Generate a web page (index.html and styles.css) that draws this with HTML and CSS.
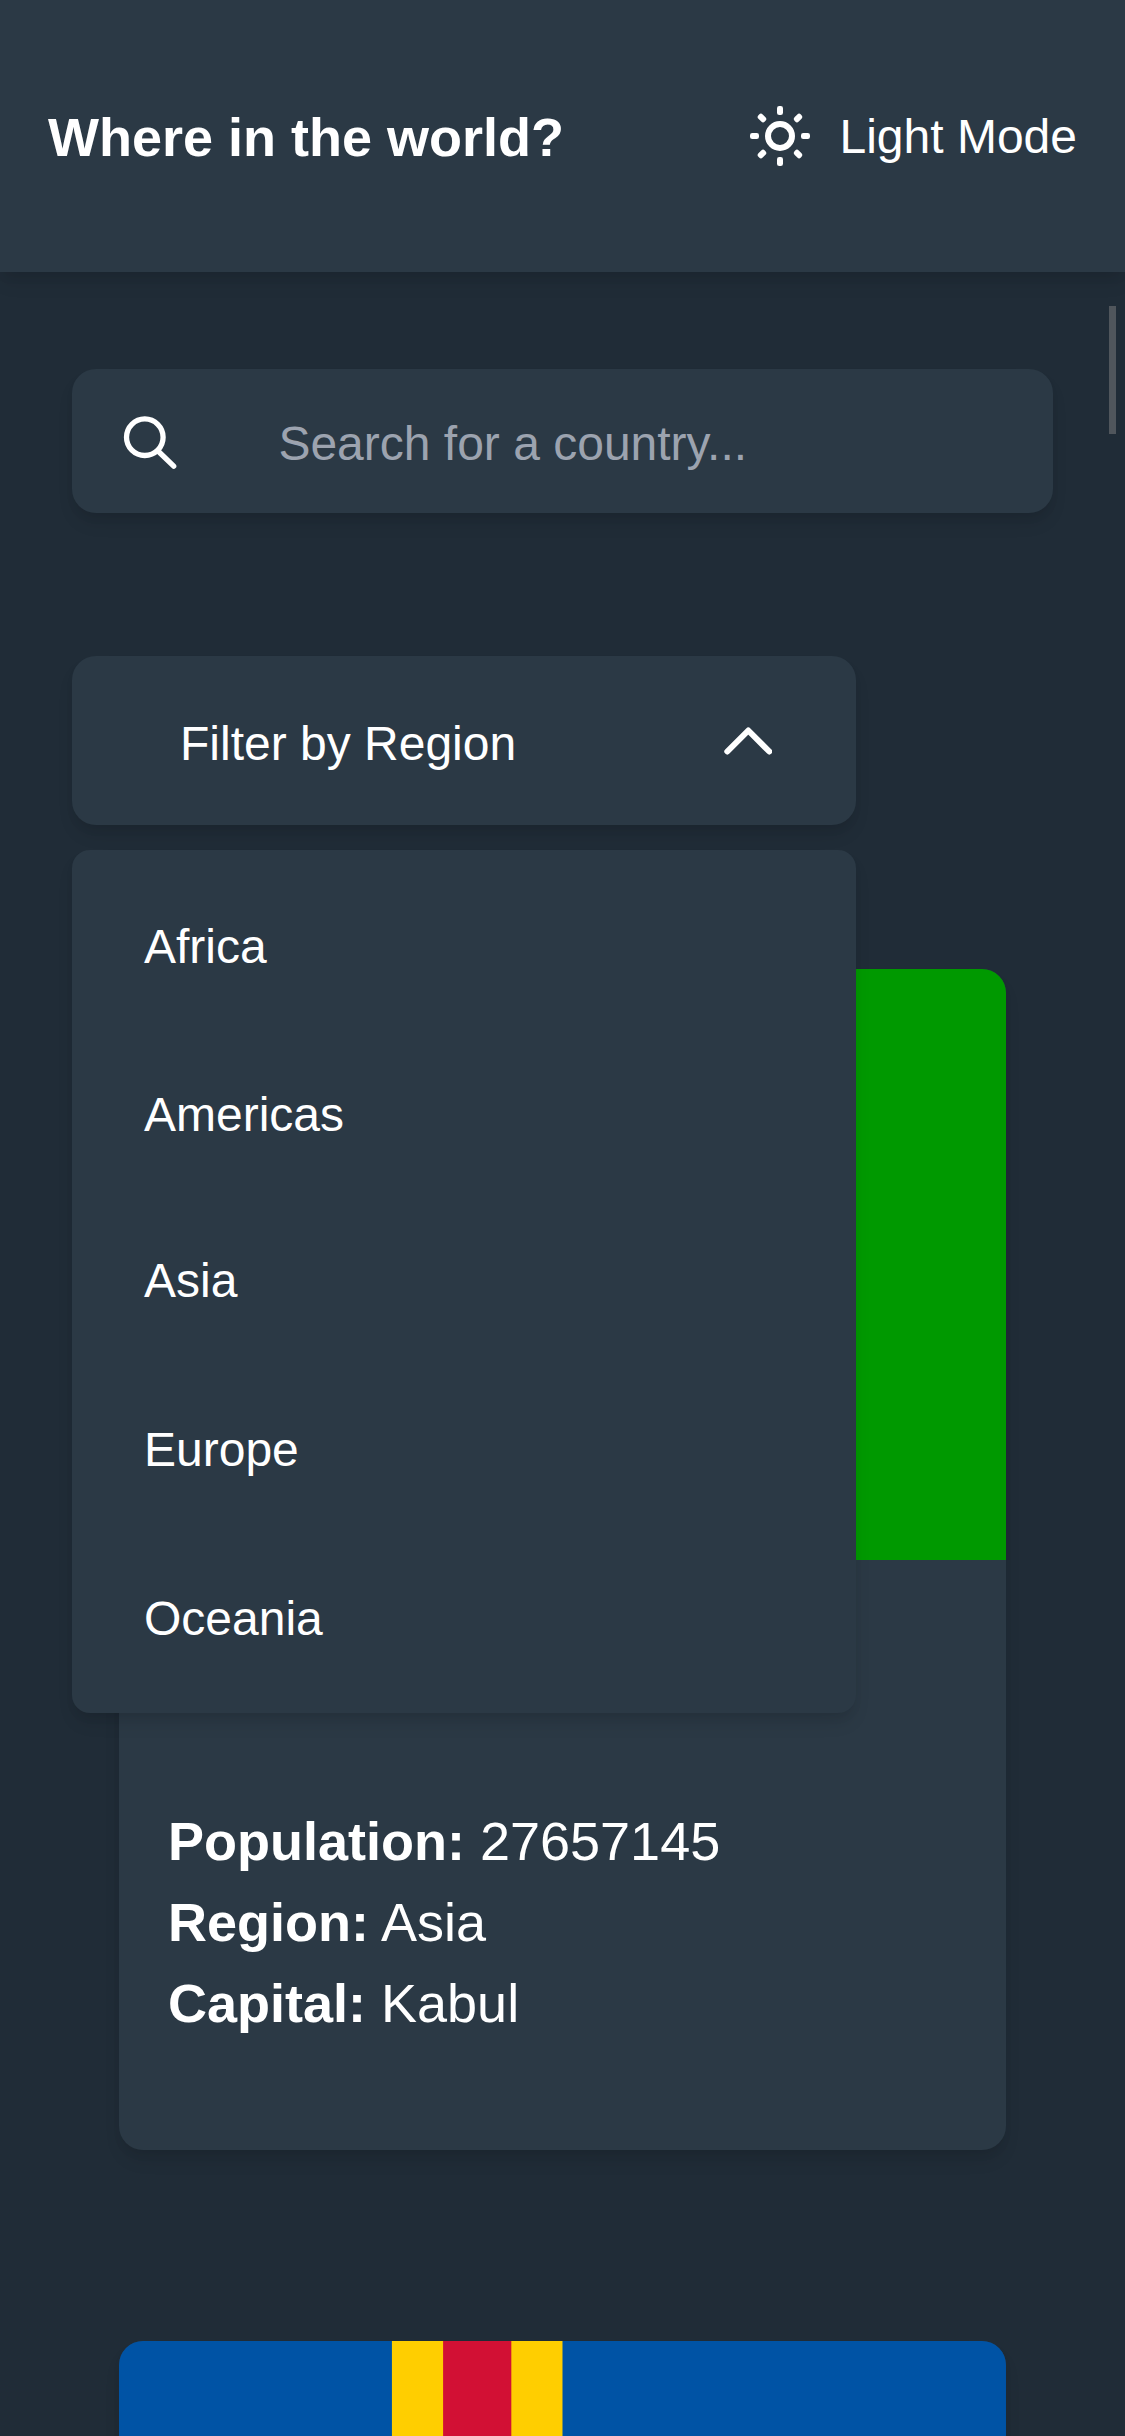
FILE: index.html
```html
<!DOCTYPE html>
<html lang="en">
<head>
<meta charset="utf-8">
<title>Where in the world?</title>
<link rel="stylesheet" href="styles.css">
</head>
<body>
<header class="header">
  <h1 class="title">Where in the world?</h1>
  <button class="theme" type="button">
    <svg class="sun" viewBox="-36 -36 72 72" fill="currentColor">
      <circle r="12" fill="none" stroke="currentColor" stroke-width="6"/>
      <rect x="-3" y="-30" width="6" height="9" rx="2.3"/>
      <rect x="-3" y="21" width="6" height="9" rx="2.3"/>
      <rect x="-30" y="-3" width="9" height="6" rx="2.3"/>
      <rect x="21" y="-3" width="9" height="6" rx="2.3"/>
      <g transform="rotate(45)">
        <rect x="-3" y="-30" width="6" height="9" rx="2.5"/>
        <rect x="-3" y="21" width="6" height="9" rx="2.5"/>
        <rect x="-30" y="-3" width="9" height="6" rx="2.5"/>
        <rect x="21" y="-3" width="9" height="6" rx="2.5"/>
      </g>
    </svg>
    <span class="theme-label">Light Mode</span>
  </button>
</header>
<main class="main">
  <label class="search">
    <svg class="search-icon" viewBox="0 0 54 54" fill="none" stroke="currentColor" stroke-width="5.3" stroke-linecap="round">
      <circle cx="21.8" cy="21.2" r="18.3"/>
      <path d="M35 35L50.7 50.2"/>
    </svg>
    <input class="search-input" type="text" placeholder="Search for a country...">
  </label>
  <div class="filter">
    <button class="filter-button" type="button">
      <span>Filter by Region</span>
      <svg class="chevron" viewBox="0 0 48 28" fill="none" stroke="currentColor" stroke-width="6" stroke-linecap="round" stroke-linejoin="round">
        <path d="M3.3 24.5L24.3 3.5L45.3 24.5"/>
      </svg>
    </button>
    <ul class="menu">
      <li class="option">Africa</li>
      <li class="option">Americas</li>
      <li class="option">Asia</li>
      <li class="option">Europe</li>
      <li class="option">Oceania</li>
    </ul>
  </div>
  <section class="countries">
    <article class="card">
      <div class="flag flag-af"></div>
      <div class="facts">
        <p><b>Population:</b> 27657145</p>
        <p><b>Region:</b> Asia</p>
        <p><b>Capital:</b> Kabul</p>
      </div>
    </article>
    <article class="card">
      <svg class="flag" viewBox="0 0 26 17" preserveAspectRatio="none">
        <path fill="#0053a5" d="M0 0h26v17H0z"/>
        <path fill="#ffce00" d="M8 0h5v6h13v5H13v6H8v-6H0V6h8z"/>
        <path fill="#d21034" d="M9.500 0h2v7.500H26v2H11.500V17h-2V9.500H0v-2h9.500z"/>
      </svg>
    </article>
  </section>
</main>
<div class="scroll-thumb"></div>
</body>
</html>
```
FILE: styles.css
```css
:root {
  --bg: #202c37;
  --surface: #2b3945;
  --shadow: 0 12px 18px -3px rgba(0, 0, 0, 0.1), 0 6px 12px -3px rgba(0, 0, 0, 0.06);
}

* {
  box-sizing: border-box;
  margin: 0;
  padding: 0;
}

body {
  position: relative;
  height: 2436px;
  overflow: hidden;
  background: var(--bg);
  color: #fff;
  font: 48px/72px "Liberation Sans", Arial, sans-serif;
}

button,
input {
  border: 0;
  background: none;
  color: inherit;
  font: inherit;
}

svg {
  display: block;
}

.header {
  display: flex;
  align-items: center;
  justify-content: space-between;
  height: 271.7px;
  padding: 0 48px;
  background: var(--surface);
  box-shadow: var(--shadow);
}

.title {
  font-size: 54px;
  line-height: 84px;
  padding-top: 2px;
}

.theme {
  display: flex;
  align-items: center;
  gap: 24px;
}

.theme-label {
  padding-top: 2px;
}

.sun {
  width: 72px;
  height: 72px;
}

.main {
  padding: 97.3px 72px 0;
}

.search {
  display: flex;
  align-items: center;
  height: 144px;
  padding-left: 51px;
  border-radius: 24px;
  background: var(--surface);
  box-shadow: var(--shadow);
}

.search-icon {
  width: 54px;
  height: 54px;
  margin-top: 3.6px;
}

.search-input {
  flex: 1;
  height: 77px;
  margin-left: 101.4px;
  padding-top: 5px;
}

.search-input::placeholder {
  color: #9ca3af;
}

.filter {
  position: relative;
  width: 784px;
  margin-top: 143.5px;
}

.filter-button {
  display: flex;
  align-items: center;
  justify-content: space-between;
  width: 100%;
  height: 168.5px;
  padding: 6px 84px 0 108px;
  border-radius: 24px;
  background: var(--surface);
  box-shadow: var(--shadow);
}

.chevron {
  width: 48px;
  height: 28px;
  margin-top: -6px;
}

.menu {
  position: absolute;
  top: 193.3px;
  left: 0;
  width: 100%;
  padding: 13px 0 10px;
  border-radius: 18px;
  background: var(--surface);
  box-shadow: var(--shadow);
  list-style: none;
}

.option {
  padding: 48px 72px;
}

.option:nth-child(3) {
  padding: 46px 72px 50px;
}

.option:nth-child(4) {
  padding: 47px 72px 49px;
}

.countries {
  display: grid;
  gap: 191px;
  padding: 144px 47px 0;
}

.card {
  height: 1181px;
  overflow: hidden;
  border-radius: 24px;
  background: var(--surface);
  box-shadow: var(--shadow);
}

.flag {
  display: block;
  width: 100%;
  height: 590.6px;
}

.flag-af {
  background: linear-gradient(90deg, #000 33.33%, #bf0000 33.33% 66.67%, #090 66.67%);
}

.facts {
  padding: 241.3px 49px 0;
  font-size: 54px;
  line-height: 81px;
}

/* Overlay scroll indicator of the touch viewport */
.scroll-thumb {
  position: absolute;
  top: 306px;
  right: 9px;
  width: 7px;
  height: 128px;
  background: #50565c;
}
```
